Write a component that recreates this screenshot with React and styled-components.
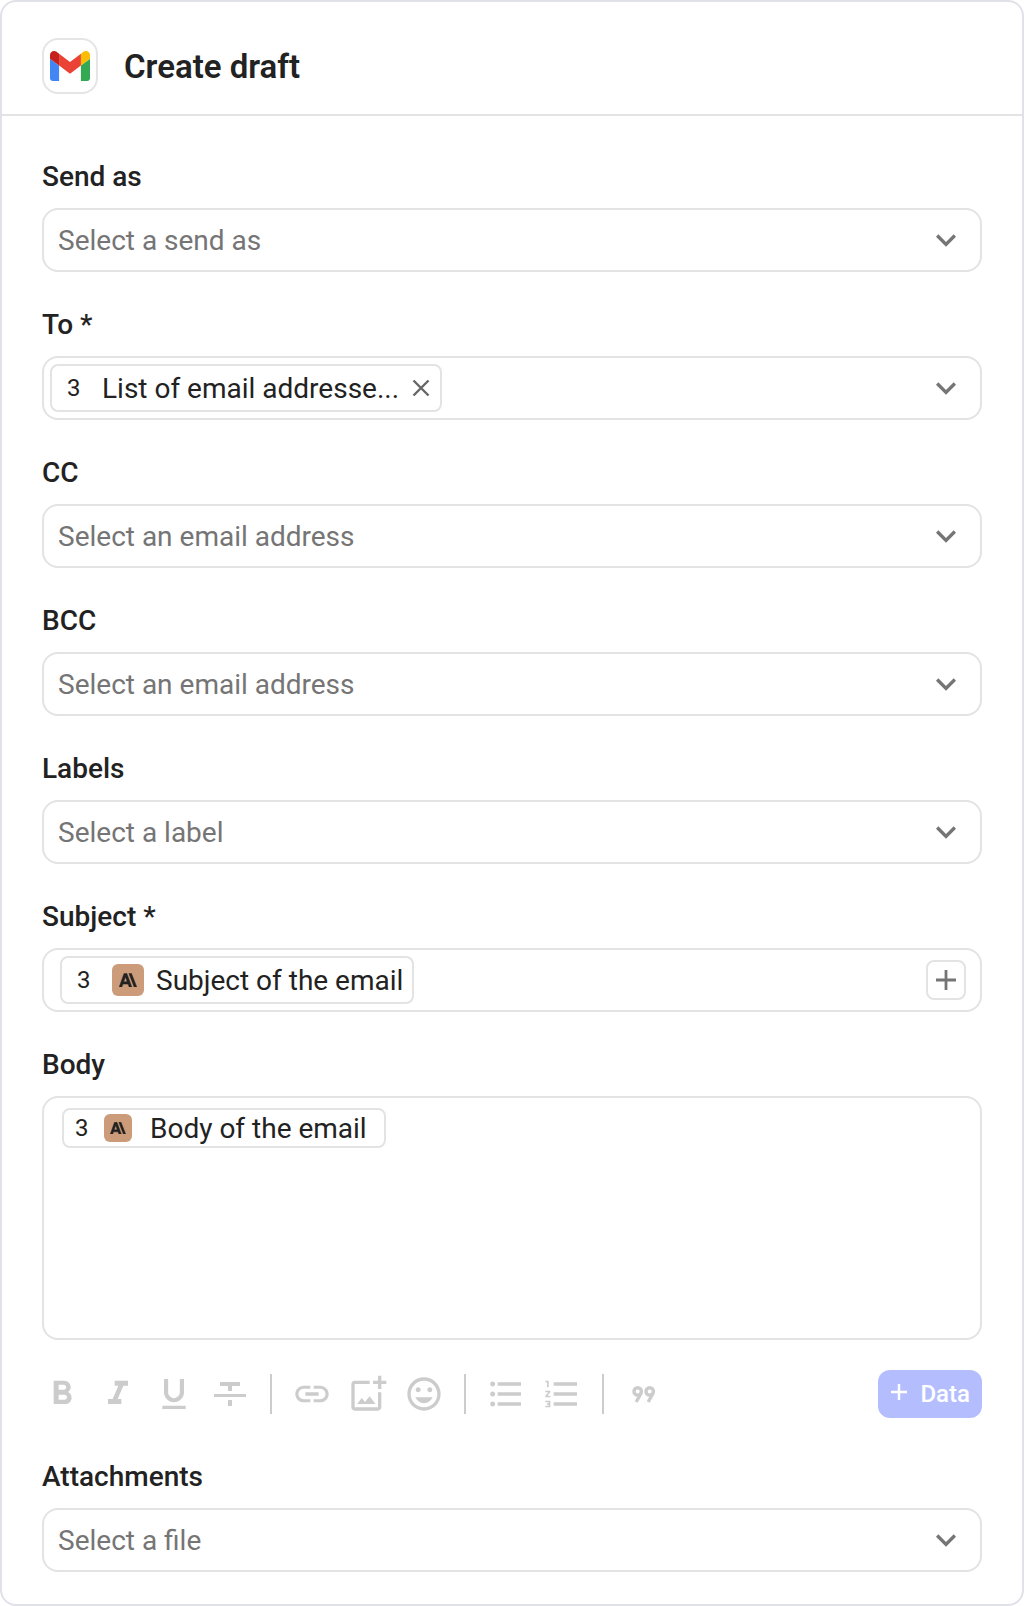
import { useId } from 'react';
import styled, { createGlobalStyle } from 'styled-components';
import {
  MdKeyboardArrowDown,
  MdFormatBold,
  MdFormatItalic,
  MdFormatUnderlined,
  MdLink,
  MdOutlineAddPhotoAlternate,
  MdOutlineInsertEmoticon,
  MdFormatListBulleted,
  MdFormatListNumbered,
} from 'react-icons/md';

const GlobalStyle = createGlobalStyle`
  *, *::before, *::after {
    box-sizing: border-box;
  }
  body {
    margin: 0;
    background: #fff;
    color: #222;
    font-family: Roboto, 'Liberation Sans', sans-serif;
    font-size: 28px;
    line-height: 40px;
  }
  button, input, select, textarea {
    font: inherit;
    color: inherit;
    border: 0;
    padding: 0;
    margin: 0;
    background: none;
    outline: none;
  }
  button {
    cursor: pointer;
  }
  svg {
    display: block;
    flex: none;
  }
`;

const Card = styled.main`
  border: 2px solid #e1e1ea;
  border-radius: 16px;
  background: #fff;
`;

const Header = styled.header`
  display: flex;
  align-items: center;
  gap: 26px;
  padding: 36px 40px 20px;
  border-bottom: 2px solid #e3e3e3;
`;

const AppIcon = styled.div`
  display: grid;
  place-items: center;
  width: 56px;
  height: 56px;
  border: 2px solid #e5e5e5;
  border-radius: 16px;
`;

const Title = styled.h1`
  margin: 0;
  padding-top: 2px;
  font-size: 33px;
  font-weight: 600;
`;

const Form = styled.form`
  display: flex;
  flex-direction: column;
  gap: 32px;
  padding: 40px 40px 32px;
`;

const Field = styled.div`
  display: flex;
  flex-direction: column;
  gap: 10px;
`;

const Label = styled.label`
  font-weight: 500;
  line-height: 42px;
`;

const Control = styled.div`
  display: flex;
  align-items: center;
  height: 64px;
  padding: ${({ $inset }) => $inset || '0'};
  border: 2px solid #e3e3e3;
  border-radius: 16px;
`;

const SelectWrap = styled.div`
  flex: 1;
  display: grid;
  align-items: center;
  height: 100%;

  > * {
    grid-area: 1 / 1;
  }
  svg {
    justify-self: end;
    margin-right: 14px;
    color: #757575;
    pointer-events: none;
  }
`;

const Select = styled.select`
  appearance: none;
  width: 100%;
  height: 100%;
  padding: 2px 54px 0 14px;
  color: #757575;
`;

const Chip = styled.span`
  display: inline-flex;
  flex: none;
  align-items: center;
  height: ${({ $small }) => ($small ? '40px' : '48px')};
  padding: ${({ $small }) => ($small ? '0 17px 0 11px' : '0 9px 0 15px')};
  border: 2px solid #e3e3e3;
  border-radius: 8px;
  white-space: nowrap;
`;

const ChipText = styled.span`
  padding-top: 2px;
`;

const Step = styled.span`
  width: ${({ $wide }) => ($wide ? '35px' : '29px')};
  font-size: 24px;
`;

const Badge = styled.span`
  display: grid;
  place-items: center;
  width: ${({ $small }) => ($small ? '28px' : '32px')};
  height: ${({ $small }) => ($small ? '28px' : '32px')};
  margin-right: ${({ $small }) => ($small ? '18px' : '12px')};
  border-radius: 6px;
  background: #cc9b7a;
`;

const RemoveButton = styled.button`
  display: grid;
  place-items: center;
  width: 20px;
  height: 32px;
  margin-left: 12px;
  color: #666;
`;

const TextInput = styled.input`
  flex: 1;
  min-width: 0;
  height: 100%;
  padding: 0 12px;
`;

const AddButton = styled.button`
  display: grid;
  place-items: center;
  width: 40px;
  height: 40px;
  border: 2px solid #e3e3e3;
  border-radius: 8px;
  color: #757575;
`;

const Editor = styled.div`
  display: flex;
  align-items: flex-start;
  height: 244px;
  padding: 10px 18px;
  border: 2px solid #e3e3e3;
  border-radius: 16px;
`;

const TextArea = styled.textarea`
  flex: 1;
  min-width: 0;
  height: 100%;
  padding: 0 12px;
  resize: none;
`;

const Toolbar = styled.div`
  display: flex;
  align-items: center;
  padding: 20px 0 6px;
`;

const ToolGroup = styled.div`
  display: flex;
  gap: 16px;
  padding: 0 20px;
  border-left: 2px solid #ccc;

  &:first-child {
    padding-left: 0;
    border-left: 0;
  }
`;

const Tool = styled.button`
  width: 40px;
  height: 40px;
  color: #ccc;
`;

const DataButton = styled.button`
  display: flex;
  align-items: center;
  gap: 12px;
  height: 48px;
  margin-left: auto;
  padding: 0 12px;
  border-radius: 12px;
  background: #b4beff;
  color: #fff;
  font-size: 24px;
  font-weight: 500;
`;

const GmailLogo = () => (
  <svg width="40" height="30" viewBox="52 42 88 66" aria-hidden="true">
    <path fill="#4285f4" d="M58 108h14V74L52 59v43c0 3.32 2.69 6 6 6" />
    <path fill="#34a853" d="M120 108h14c3.32 0 6-2.69 6-6V59l-20 15" />
    <path fill="#fbbc04" d="M120 48v26l20-15v-8c0-7.42-8.47-11.65-14.4-7.2" />
    <path fill="#ea4335" d="M72 74V48l24 18 24-18v26L96 92" />
    <path fill="#c5221f" d="M52 51v8l20 15V48l-5.6-4.2c-5.94-4.45-14.4-.22-14.4 7.2" />
  </svg>
);

const AnthropicLogo = ({ width }) => (
  <svg width={width} viewBox="0 2.5 24 19" fill="#222" stroke="#222" strokeWidth="0.6" aria-hidden="true">
    <path d="M16.6 3h-3.4l6.9 18h3.6zM6.7 3L0.3 21h3.6l1.4-3.7h6.8l1.4 3.7h3.6L10.5 3zm-.4 11l2.3-6.2 2.3 6.2z" />
  </svg>
);

const Cross = () => (
  <svg width="20" height="20" viewBox="0 0 20 20" stroke="currentColor" strokeWidth="2.4" aria-hidden="true">
    <path d="M2.5 2.5l15 15M17.5 2.5l-15 15" />
  </svg>
);

const Plus = () => (
  <svg width="20" height="20" viewBox="0 0 20 20" fill="currentColor" aria-hidden="true">
    <path d="M8.6 0h2.8v8.6H20v2.8h-8.6V20H8.6v-8.6H0V8.6h8.6z" />
  </svg>
);

const ThinPlus = () => (
  <svg width="18" height="24" viewBox="0 0 18 24" stroke="currentColor" strokeWidth="2.4" aria-hidden="true">
    <path d="M9 2v16M1 10h16" />
  </svg>
);

const Strike = () => (
  <svg width="40" height="40" viewBox="0 0 40 40" fill="currentColor" aria-hidden="true">
    <path d="M10 8h20v4h-8v5h-4v-5h-8zM4 20h32v3H4zM18 26h4v6h-4z" />
  </svg>
);

const Quote = () => (
  <svg width="40" height="40" viewBox="0 0 40 40" fill="none" stroke="currentColor" strokeWidth="3.4" aria-hidden="true">
    <circle cx="13.7" cy="17.4" r="3.7" />
    <path d="M17 19.2L12.2 28" />
    <circle cx="25.7" cy="17.4" r="3.7" />
    <path d="M29 19.2L24.2 28" />
  </svg>
);

const toolGroups = [
  [
    ['Bold', MdFormatBold],
    ['Italic', MdFormatItalic],
    ['Underline', MdFormatUnderlined],
    ['Strikethrough', Strike],
  ],
  [
    ['Link', MdLink],
    ['Image', MdOutlineAddPhotoAlternate],
    ['Emoji', MdOutlineInsertEmoticon],
  ],
  [
    ['Bulleted list', MdFormatListBulleted],
    ['Numbered list', MdFormatListNumbered],
  ],
  [['Quote', Quote]],
];

const SelectField = ({ label, placeholder = '', children }) => {
  const id = useId();
  return (
    <Field>
      <Label htmlFor={id}>{label}</Label>
      <Control $inset={children && '0 0 0 6px'}>
        {children}
        <SelectWrap>
          <Select id={id} defaultValue="">
            <option value="">{placeholder}</option>
          </Select>
          <MdKeyboardArrowDown size={40} />
        </SelectWrap>
      </Control>
    </Field>
  );
};

const App = () => {
  return (
    <>
      <GlobalStyle />
      <Card>
        <Header>
          <AppIcon>
            <GmailLogo />
          </AppIcon>
          <Title>Create draft</Title>
        </Header>
        <Form onSubmit={(e) => e.preventDefault()}>
          <SelectField label="Send as" placeholder="Select a send as" />
          <SelectField label="To *">
            <Chip>
              <Step $wide>3</Step>
              <ChipText>List of email addresse...</ChipText>
              <RemoveButton type="button" aria-label="Remove">
                <Cross />
              </RemoveButton>
            </Chip>
          </SelectField>
          <SelectField label="CC" placeholder="Select an email address" />
          <SelectField label="BCC" placeholder="Select an email address" />
          <SelectField label="Labels" placeholder="Select a label" />
          <Field>
            <Label htmlFor="subject">Subject *</Label>
            <Control $inset="0 14px 0 16px">
              <Chip>
                <Step $wide>3</Step>
                <Badge>
                  <AnthropicLogo width={18} />
                </Badge>
                <ChipText>Subject of the email</ChipText>
              </Chip>
              <TextInput id="subject" type="text" />
              <AddButton type="button" aria-label="Insert data">
                <Plus />
              </AddButton>
            </Control>
          </Field>
          <Field>
            <Label htmlFor="body">Body</Label>
            <Editor>
              <Chip $small>
                <Step>3</Step>
                <Badge $small>
                  <AnthropicLogo width={16} />
                </Badge>
                <ChipText>Body of the email</ChipText>
              </Chip>
              <TextArea id="body" />
            </Editor>
            <Toolbar>
              {toolGroups.map((tools) => (
                <ToolGroup key={tools[0][0]}>
                  {tools.map(([name, Icon]) => (
                    <Tool key={name} type="button" aria-label={name}>
                      <Icon size={40} />
                    </Tool>
                  ))}
                </ToolGroup>
              ))}
              <DataButton type="button">
                <ThinPlus />
                Data
              </DataButton>
            </Toolbar>
          </Field>
          <SelectField label="Attachments" placeholder="Select a file" />
        </Form>
      </Card>
    </>
  );
};

export default App;
